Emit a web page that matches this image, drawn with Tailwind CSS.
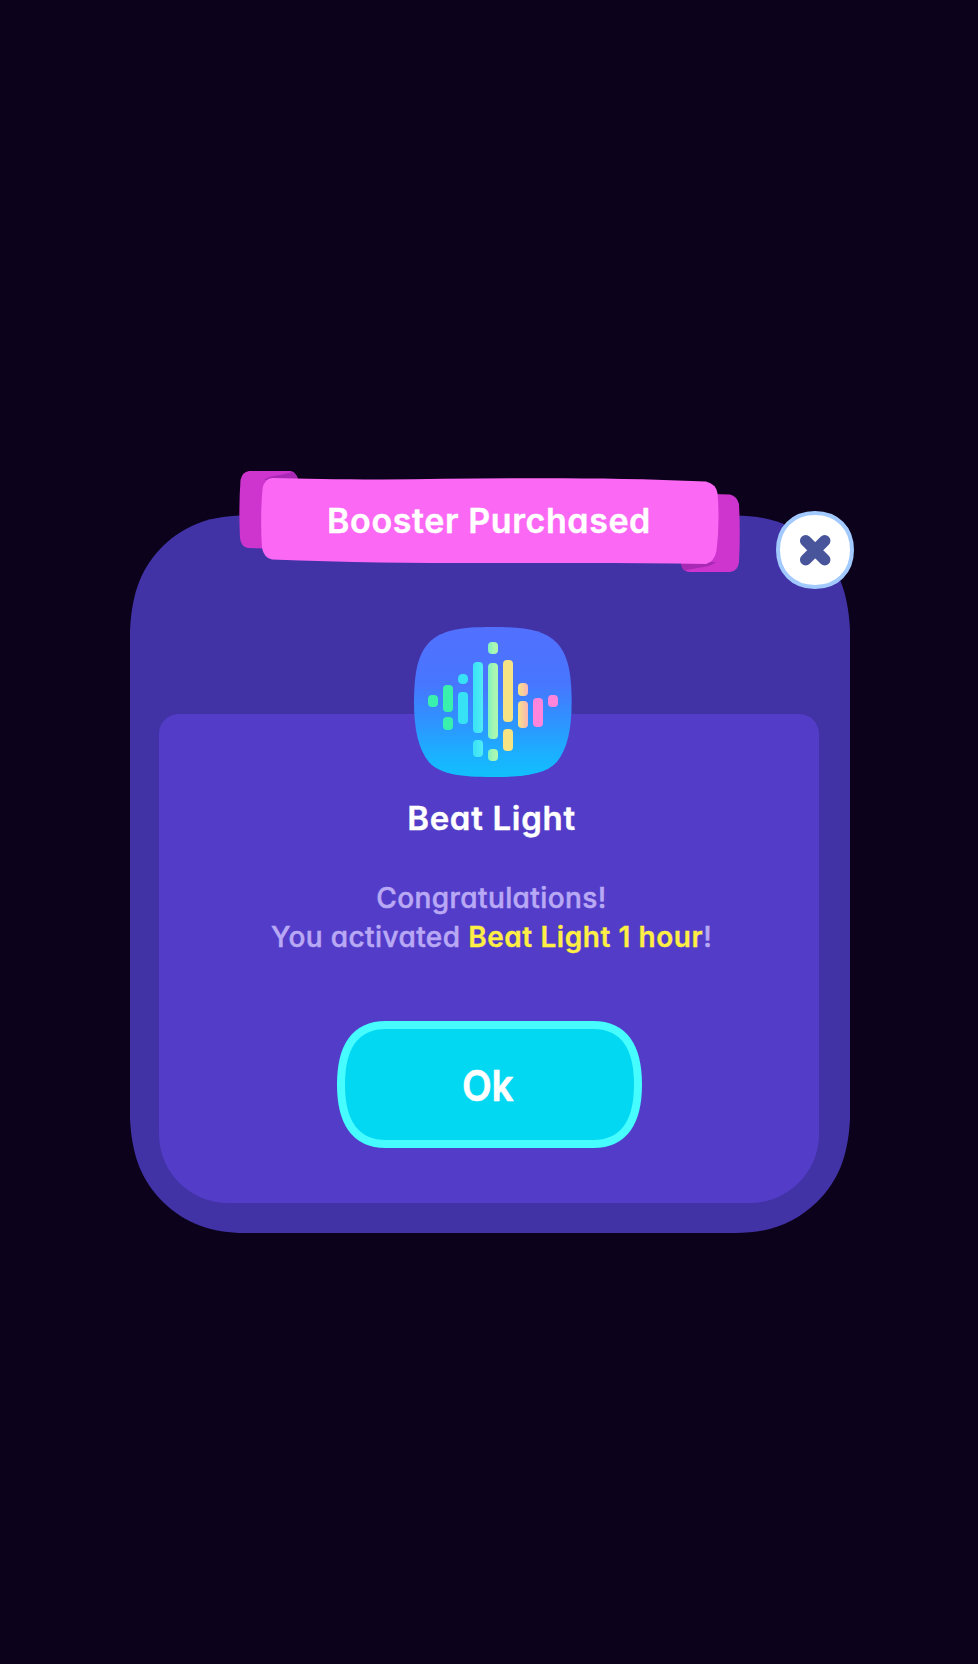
<!DOCTYPE html>
<html lang="en">
<head>
<meta charset="utf-8">
<title>Booster Purchased</title>
<script src="https://cdn.jsdelivr.net/npm/@tailwindcss/browser@4"></script>
</head>
<body class="bg-[#0c021b] font-['Inter','Noto_Sans',sans-serif] [font-feature-settings:'cv11'] antialiased">
<main class="flex h-[1664px] w-[978px] flex-col overflow-hidden pt-[515px] pl-[130px]">
  <section class="relative isolate flex h-[718px] w-[720px] flex-col pt-[199px] pl-[29px]" role="dialog">
    <svg class="absolute inset-0 -z-10" width="720" height="718" viewBox="0 0 720 718" fill="#4133a5"><path d="M0 115C2 76 12 52 33 31C56 9 82 .5 115 .5H605C638 .5 664 9 687 31C708 52 718 76 720 115V604C718 642 708 666 687 687C664 709 638 718 605 718H115C82 718 56 709 33 687C12 666 2 642 0 604Z"/></svg>

    <div class="flex h-[489px] w-[660px] flex-col items-center rounded-t-[20px] rounded-b-[69px] bg-[#533dc8] pt-[84px]">
      <h2 class="ml-[5px] h-[40px] whitespace-nowrap text-[33px] leading-[40px] font-semibold tracking-[0.7px] text-white [-webkit-text-stroke:0.4px_#fff]">Beat Light</h2>
      <p class="ml-[5px] mt-[41px] whitespace-nowrap text-center text-[28px] leading-[39px] font-medium tracking-[0.4px] text-[#b9a9f5] [-webkit-text-stroke:0.5px_#b9a9f5]">Congratulations!<br>You activated <span class="font-semibold tracking-[0.55px] text-[#ffee44] [-webkit-text-stroke:0.3px_#ffee44]">Beat Light 1 hour</span>!</p>
      <button class="relative isolate mt-[64px] flex h-[127px] w-[305px] items-center justify-center text-[43px] leading-none font-semibold text-white">
        <svg class="absolute inset-0 -z-10" width="305" height="127" viewBox="0 0 305 127" fill="#03d8f2" stroke="#46fcff" stroke-width="8"><path d="M4 63.500C4 27 17 4 49 4H256C288 4 301 27 301 63.500C301 100 288 123 256 123H49C17 123 4 100 4 63.500Z"/></svg>
        <span class="mt-[1px] ml-[-2px] inline-block scale-x-90 [-webkit-text-stroke:0.6px_#fff]">Ok</span>
      </button>
    </div>

    <svg class="absolute left-[270px] top-[100px]" width="185" height="175" viewBox="0 0 555 525">
      <defs>
        <linearGradient id="sky" x1="0" y1="36" x2="0" y2="486" gradientUnits="userSpaceOnUse"><stop offset="0" stop-color="#5270ff"/><stop offset=".38" stop-color="#4776ff"/><stop offset=".65" stop-color="#2d96ff"/><stop offset=".85" stop-color="#1bb0ff"/><stop offset="1" stop-color="#12bffc"/></linearGradient>
        <linearGradient id="mint"><stop offset="0" stop-color="#7ff2c4"/><stop offset=".6" stop-color="#a8f7b2"/><stop offset="1" stop-color="#aff8b0"/></linearGradient>
        <linearGradient id="aqua"><stop offset="0" stop-color="#38e2f5"/><stop offset="1" stop-color="#52ecf5"/></linearGradient>
        <linearGradient id="peach"><stop offset="0" stop-color="#f6e384"/><stop offset="1" stop-color="#fab5b5"/></linearGradient>
      </defs>
      <path fill="url(#sky)" d="M42 260C43 180 50 124 86 84C124 44 184 36 278 36C372 36 433 44 471 84C507 124 514 180 515 260C515 345 501 402 471 440C439 478 372 486 278 486C184 486 118 478 86 440C56 402 42 345 42 260Z"/>
      <g fill="#39f0ac"><rect x="84" y="240" width="30" height="36" rx="12"/><rect x="129" y="210" width="30" height="81" rx="12"/><rect x="129" y="306" width="30" height="39" rx="12"/></g>
      <g fill="#38e2f5"><rect x="174" y="177" width="30" height="30" rx="13"/><rect x="174" y="231" width="30" height="96" rx="12"/></g>
      <g fill="url(#aqua)"><rect x="219" y="141" width="30" height="213" rx="12"/><rect x="219" y="375" width="30" height="51" rx="12"/></g>
      <g fill="url(#mint)"><rect x="264" y="81" width="30" height="36" rx="12"/><rect x="264" y="144" width="30" height="228" rx="12"/><rect x="264" y="402" width="30" height="36" rx="12"/></g>
      <g fill="#f6e384"><rect x="309" y="135" width="30" height="186" rx="12"/><rect x="309" y="342" width="30" height="66" rx="12"/></g>
      <g fill="url(#peach)"><rect x="354" y="204" width="30" height="39" rx="12"/><rect x="354" y="258" width="30" height="81" rx="12"/></g>
      <g fill="#ff85dc"><rect x="399" y="249" width="30" height="87" rx="12"/><rect x="444" y="240" width="30" height="36" rx="12"/></g>
    </svg>

    <header class="absolute left-[109px] top-[-45px] isolate flex h-[103px] w-[502px] items-center justify-center">
      <svg class="absolute inset-0 -z-10" width="502" height="103" viewBox="239 470 502 103">
        <path fill="#ce34ce" d="M249 471H290Q295 471 298 479L270 548.500L248 548Q241 547 240 538Q238.500 509 240.500 480Q242 472 249 471Z"/>
        <path fill="#a82ab4" d="M293 472Q297 475 298 480H264Q269 476 280 475Z"/>
        <path fill="#ce34ce" d="M712 494L730 494.500Q737 496 739 504Q740.500 533 739 562Q738 571 730 572H690Q683 572 681 563Z"/>
        <path fill="#a82ab4" d="M681 562H716Q712 566 703 567L684 570.500Q681 568 681 562Z"/>
        <path fill="#fb68f4" d="M272 478C300 478.500 340 479.500 380 479.500C480 479 580 476 706 481.500Q716 484 717.500 493Q720 523 716.500 551Q714 562 706 564C560 561 430 566 272 559.500Q264 558 262 548Q260 518 262.500 489Q264 479 272 478Z"/>
      </svg>
      <h1 class="ml-[-2px] mt-[-1px] whitespace-nowrap text-[34px] leading-[42px] font-semibold tracking-[0.6px] text-white [-webkit-text-stroke:0.4px_#fff]">Booster Purchased</h1>
    </header>

    <button class="absolute left-[646px] top-[-4px]" aria-label="Close">
      <svg width="78" height="78" viewBox="0 0 78 78"><path d="M2 39C2 17 17 2 39 2S76 17 76 39S61 76 39 76S2 61 2 39Z" fill="#fff" stroke="#a3caff" stroke-width="4"/><path d="M29.700 29.700L48.700 48.700M48.700 29.700L29.700 48.700" stroke="#48559b" stroke-width="11.500" stroke-linecap="round"/></svg>
    </button>
  </section>
</main>
</body>
</html>
